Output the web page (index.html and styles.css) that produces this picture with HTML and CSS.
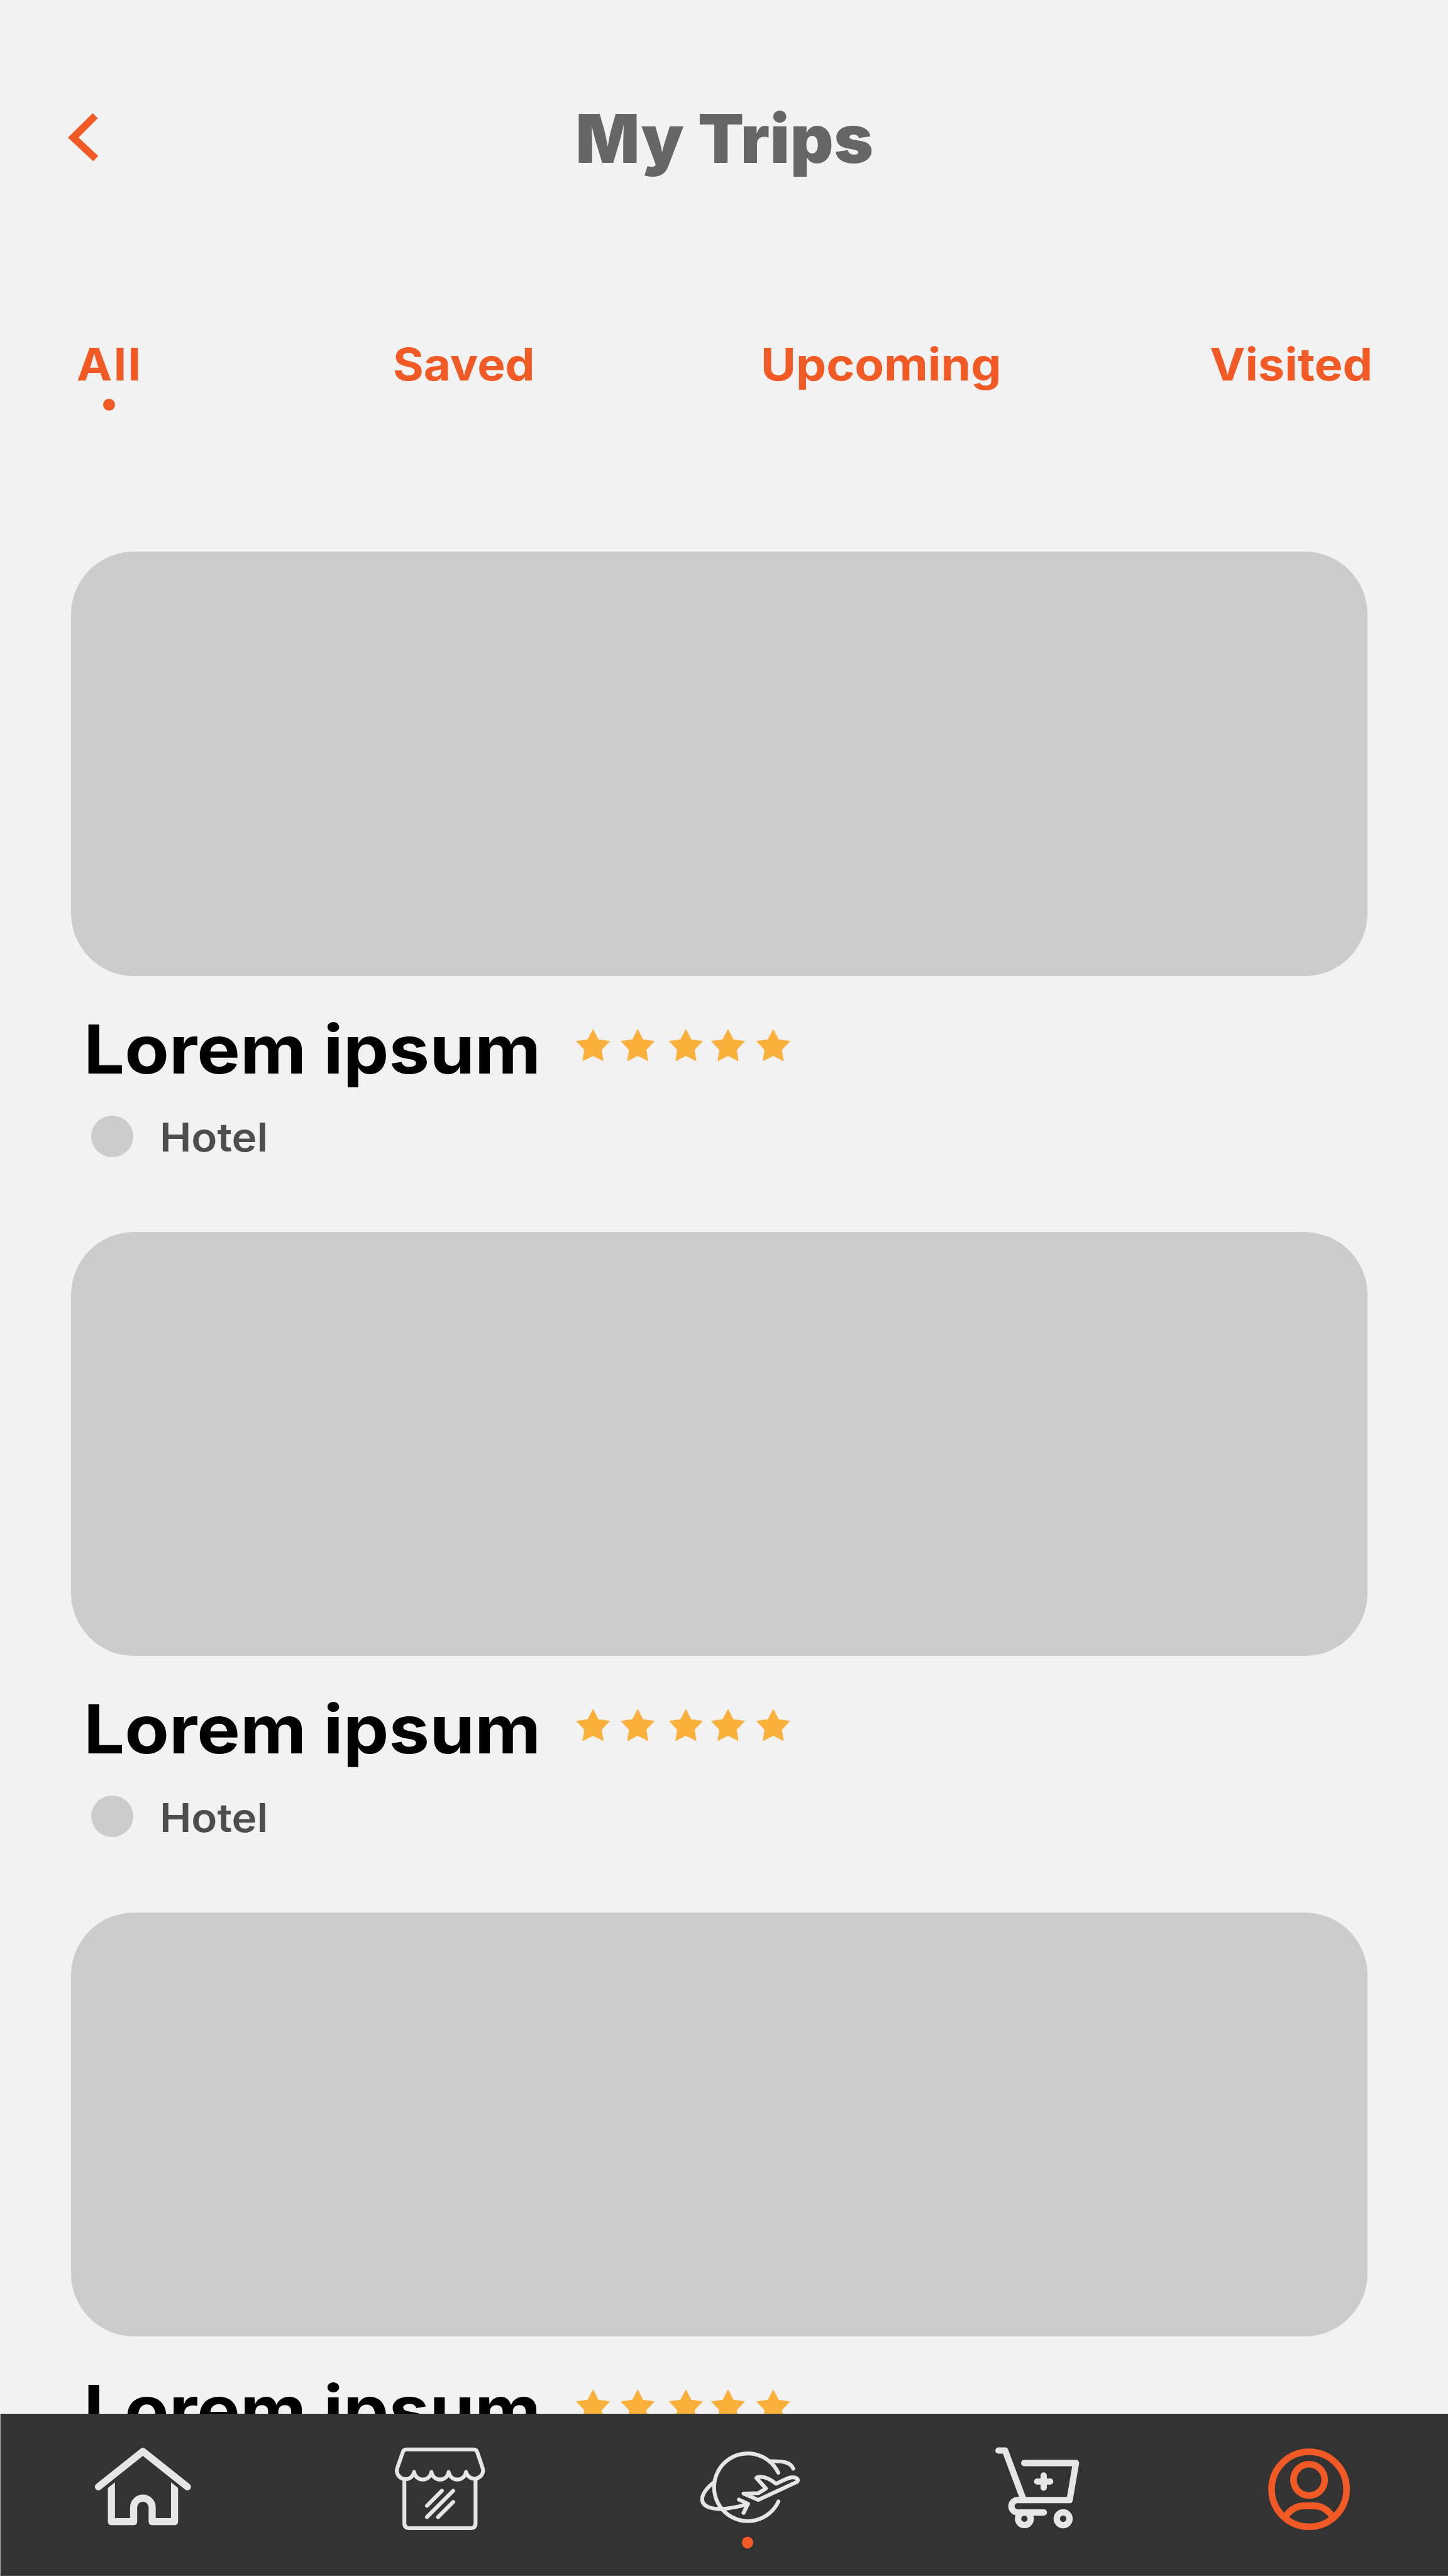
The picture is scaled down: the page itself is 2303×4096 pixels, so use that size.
FILE: index.html
```html
<!DOCTYPE html>
<html lang="en">
<head>
<meta charset="utf-8">
<title>My Trips</title>
<link rel="stylesheet" href="styles.css">
</head>
<body>
<svg class="defs" aria-hidden="true">
  <symbol id="stars" viewBox="0 0 463 70">
    <path id="star" d="M36.9 0 48.6 22.7 73.8 26 55.8 45 59.6 70 36.9 58.3 14.2 70 18 45 0 26 25.2 22.7Z"/>
    <use href="#star" x="96.5"/>
    <use href="#star" x="200.6"/>
    <use href="#star" x="291.6"/>
    <use href="#star" x="389.2"/>
  </symbol>
</svg>
<div class="screen">
  <header class="header">
    <a class="back" aria-label="Back"><svg viewBox="0 0 66 104"><path d="M53.6 0 64.5 11 23 52.6 65.6 92.4 54.6 103.6 0 52.6Z"/></svg></a>
    <h1 class="title">My Trips</h1>
  </header>

  <nav class="tabs">
    <a class="tab"><span class="tab-label all">All</span><span class="tab-dot"></span></a>
    <a class="tab"><span class="tab-label saved">Saved</span></a>
    <a class="tab"><span class="tab-label upcoming">Upcoming</span></a>
    <a class="tab"><span class="tab-label visited">Visited</span></a>
  </nav>

  <main class="trips">
    <article class="trip">
      <div class="photo"></div>
      <div class="trip-head"><h2 class="name">Lorem ipsum</h2><svg class="stars"><use href="#stars"/></svg></div>
      <div class="kind"><span class="kind-dot"></span><span class="kind-label">Hotel</span></div>
    </article>
    <article class="trip">
      <div class="photo"></div>
      <div class="trip-head"><h2 class="name">Lorem ipsum</h2><svg class="stars"><use href="#stars"/></svg></div>
      <div class="kind"><span class="kind-dot"></span><span class="kind-label">Hotel</span></div>
    </article>
    <article class="trip">
      <div class="photo"></div>
      <div class="trip-head"><h2 class="name">Lorem ipsum</h2><svg class="stars"><use href="#stars"/></svg></div>
    </article>
  </main>

  <nav class="bar">
    <svg class="icon home" viewBox="0 26 780 1051" stroke-width="46">
      <path d="M96 499 384 270 672 499"/>
      <path stroke-linecap="butt" d="M180 518V725H324V632A60 60 0 0 1 444 632V725H589V518"/>
      <path class="solid" d="M157 520V512Q157 506 162 502L203 470V520ZM612 520V512Q612 506 607 502L566 470V520Z"/>
    </svg>
    <svg class="icon shop" viewBox="0 26 780 1051" stroke-width="25">
      <path d="M194 403A56.5 56.5 0 0 1 82 397Q82 388 85 378L121 274Q127 257 143 257H580Q597 257 603 274L638 378Q641 388 641 397A56.5 56.5 0 0 1 530 403A56.5 56.5 0 0 1 418 403A56.5 56.5 0 0 1 306 403A56.5 56.5 0 0 1 194 403Z"/>
      <path d="M131 455V735Q131 767 163 767H560Q592 767 592 735V455M374 525 277 622M447 525 277 695M447 597 349 695"/>
    </svg>
    <svg class="icon travel" viewBox="0 -94 840 1051" stroke-width="25">
      <path d="M602 288A218.500 219 0 1 0 603 474"/>
      <path d="M550 214C620 212 680 215 699 262"/>
      <path d="M187 348C140 385 108 425 109 462C112 515 190 530 275 519C315 513 350 507 400 492"/>
      <path d="M347 462 406 489 377 548"/>
      <path d="M472 464 722 348C738 335 725 318 692 318C672 318 655 327 588 359C560 340 530 316 490 315C475 314 465 316 460 322L522 390 474 420 377 423Z"/>
      <ellipse class="active-dot" cx="403" cy="740" rx="37" ry="38"/>
    </svg>
    <svg class="icon cart" viewBox="0 -64 780 1051" stroke-width="41">
      <path d="M106 174H149L267 490"/>
      <path d="M273 255H608L567 495H230A40 40 0 0 0 230 575H400"/>
      <path d="M357 375H441M399 336V414"/>
      <circle cx="274" cy="616" r="41"/>
      <circle cx="525" cy="616" r="41.500"/>
    </svg>
    <svg class="icon profile" viewBox="0 -124 780 1051" stroke-width="43">
      <circle cx="379" cy="365" r="243"/>
      <circle cx="379" cy="304" r="101"/>
      <path stroke-linecap="butt" d="M232 535C262 492 303 472 350 472H407C454 472 495 492 525 535"/>
    </svg>
  </nav>
</div>
</body>
</html>
```
FILE: styles.css
```css
* { box-sizing: border-box; margin: 0; padding: 0; }

body {
  background: #f2f2f2;
  font-family: Inter, "Liberation Sans", sans-serif;
}

.defs { display: none; }

.screen {
  width: 2303px;
  height: 4096px;
  overflow: hidden;
  display: flex;
  flex-direction: column;
}

.header {
  flex: none;
  height: 442px;
  display: grid;
  grid-template-columns: 1fr auto 1fr;
  align-items: center;
}

.back { padding: 0 0 5px 107.600px; }
.back svg { display: block; width: 48.600px; height: 76.600px; fill: #f15a24; }

.title {
  padding-left: 2px;
  font-size: 106.700px;
  line-height: 120px;
  font-weight: 900;
  letter-spacing: 0.600px;
  color: #666;
}

.tabs {
  flex: none;
  height: 435.300px;
  padding: 93px 0 0 122.200px;
  display: grid;
  grid-template-columns: 502.500px 585px 714.700px auto;
  align-items: start;
}

.tab {
  font-size: 71px;
  line-height: 88px;
  font-weight: 700;
  color: #f15a24;
  white-space: nowrap;
}

/* The labels are set slightly extended */
.tab-label { display: block; width: max-content; transform-origin: left center; }
.all { letter-spacing: 2.300px; transform: scaleX(1.06); }
.saved { transform: scaleX(1.05); }
.upcoming { transform: scaleX(1.077); }
.visited { transform: scaleX(1.064); }

.tab-dot {
  display: block;
  width: 19px;
  height: 19px;
  margin: 10.700px 0 0 42.300px;
  border-radius: 50%;
  background: #f15a24;
}

.trips {
  flex: 1;
  min-height: 0;
  overflow: hidden;
  padding-left: 113px;
  display: flex;
  flex-direction: column;
  gap: 119.400px;
}

.trip { flex: none; }

.photo {
  width: 2062.300px;
  height: 674.500px;
  border-radius: 100px;
  background: #ccc;
}

.trip-head {
  height: 130px;
  margin-top: 50.800px;
  padding-left: 20px;
  display: flex;
  align-items: center;
  gap: 108.100px;
}

.name {
  font-size: 107px;
  line-height: 130px;
  font-weight: 700;
  transform: scaleX(1.0785);
  transform-origin: left center;
  color: #000;
}

.stars { width: 341px; height: 51.600px; margin-bottom: 12px; fill: #fbb03b; }

.kind {
  height: 66px;
  margin-top: 41px;
  padding-left: 31.700px;
  display: flex;
  align-items: center;
  gap: 42.200px;
}

.kind-dot { width: 67px; height: 66px; border-radius: 50%; background: #ccc; }

.kind-label {
  padding-top: 3px;
  font-size: 62.800px;
  line-height: 66px;
  font-weight: 600;
  transform: scaleX(1.075);
  transform-origin: left center;
  color: #4d4d4d;
}

.bar {
  flex: none;
  height: 258.200px;
  padding-left: 131.600px;
  border-left: 1px solid #a8a8a8;
  border-bottom: 1px solid #555;
  background: #333;
  display: grid;
  grid-template-columns: 478.800px 478.800px 471.500px 427.300px auto;
  justify-content: start;
}

.icon {
  width: 191.500px;
  height: 258.100px;
  fill: none;
  stroke: #e6e6e6;
  stroke-linecap: round;
  stroke-linejoin: round;
}

.travel { width: 206.300px; }
.profile { stroke: #f15a24; }
.solid { fill: #e6e6e6; stroke: none; }
.active-dot { fill: #f15a24; stroke: none; }
```
